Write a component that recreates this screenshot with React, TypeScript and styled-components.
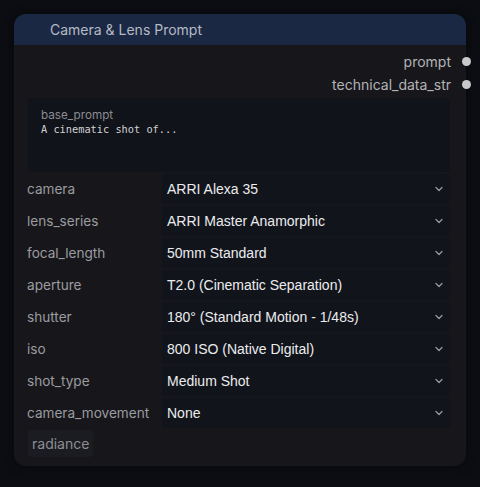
import React from "react";
import styled, { createGlobalStyle } from "styled-components";

const Global = createGlobalStyle`
  html, body {
    margin: 0;
    padding: 0;
    background: #0b0d12;
  }
  body {
    font-family: Inter, "Noto Sans", sans-serif;
  }
`;

const fields: { name: string; value: string }[] = [
  { name: "camera", value: "ARRI Alexa 35" },
  { name: "lens_series", value: "ARRI Master Anamorphic" },
  { name: "focal_length", value: "50mm Standard" },
  { name: "aperture", value: "T2.0 (Cinematic Separation)" },
  { name: "shutter", value: "180° (Standard Motion - 1/48s)" },
  { name: "iso", value: "800 ISO (Native Digital)" },
  { name: "shot_type", value: "Medium Shot" },
  { name: "camera_movement", value: "None" },
];

function Chevron() {
  return (
    <svg width="10" height="10" viewBox="0 0 10 10">
      <path d="M2 3.5 L5 6.5 L8 3.5" fill="none" stroke="#9a9ca3" strokeWidth="1.2" strokeLinecap="round" strokeLinejoin="round" />
    </svg>
  );
}

export default function App() {
  return (
    <S.Page>
      <Global />
      <S.Node>
        <S.Header>Camera &amp; Lens Prompt</S.Header>
        <S.Outputs>
          <S.Output>
            prompt
            <S.Dot />
          </S.Output>
          <S.Output>
            technical_data_str
            <S.Dot />
          </S.Output>
        </S.Outputs>
        <S.TextArea>
          <S.AreaLabel>base_prompt</S.AreaLabel>
          <S.AreaText>A cinematic shot of...</S.AreaText>
        </S.TextArea>
        <S.Fields>
          {fields.map((f) => (
            <S.Row key={f.name}>
              <S.Label>{f.name}</S.Label>
              <S.Select>
                <span>{f.value}</span>
                <Chevron />
              </S.Select>
            </S.Row>
          ))}
        </S.Fields>
        <S.Footer>
          <S.Tag>radiance</S.Tag>
        </S.Footer>
      </S.Node>
    </S.Page>
  );
}

const S = {
  Page: styled.div`
    width: 480px;
    height: 487px;
    padding: 14px;
    box-sizing: border-box;
    background: #0b0d12;
  `,
  Node: styled.div`
    width: 452px;
    height: 452px;
    background: #17171b;
    border-radius: 12px;
    display: flex;
    flex-direction: column;
    box-shadow: 0 0 12px rgba(0, 0, 0, 0.4);
  `,
  Header: styled.div`
    height: 31px;
    background: #1b2843;
    border-radius: 12px 12px 0 0;
    padding-left: 36px;
    display: flex;
    align-items: center;
    font-size: 14px;
    color: #b4bac6;
  `,
  Outputs: styled.div`
    display: flex;
    flex-direction: column;
    align-items: flex-end;
    gap: 5px;
    padding-top: 7px;
  `,
  Output: styled.div`
    display: flex;
    align-items: center;
    gap: 11px;
    height: 18px;
    font-size: 14px;
    color: #b3b3b6;
    margin-right: -5px;
  `,
  Dot: styled.span`
    width: 9px;
    height: 9px;
    border-radius: 50%;
    background: #c9c9cc;
  `,
  TextArea: styled.div`
    margin: 5px 16px 0 14px;
    height: 74px;
    background: #10131a;
    border-radius: 4px;
    padding: 11px 13px;
    box-sizing: border-box;
  `,
  AreaLabel: styled.div`
    font-size: 11.7px;
    line-height: 13px;
    color: #8c8c90;
  `,
  AreaText: styled.div`
    font-family: "DejaVu Sans Mono", "Liberation Mono", monospace;
    font-size: 10.3px;
    line-height: 14px;
    color: #d2d2d4;
  `,
  Fields: styled.div`
    display: flex;
    flex-direction: column;
    margin-top: 1px;
  `,
  Row: styled.div`
    height: 32px;
    display: flex;
    align-items: center;
    padding: 0 16px 0 13px;
  `,
  Label: styled.div`
    width: 135px;
    font-size: 13.6px;
    color: #9b9ba0;
  `,
  Select: styled.div`
    flex: 1;
    height: 30px;
    background: #11141b;
    border-radius: 4px;
    display: flex;
    align-items: center;
    justify-content: space-between;
    padding: 0 6px 0 5px;
    font-family: "Liberation Sans", Arial, sans-serif;
    font-size: 14px;
    color: #ececee;
  `,
  Footer: styled.div`
    padding: 1px 14px 0;
  `,
  Tag: styled.div`
    display: inline-block;
    padding: 5px 4px;
    border-radius: 4px;
    background: #1a1c21;
    font-size: 14px;
    color: #8e8e93;
  `,
};
